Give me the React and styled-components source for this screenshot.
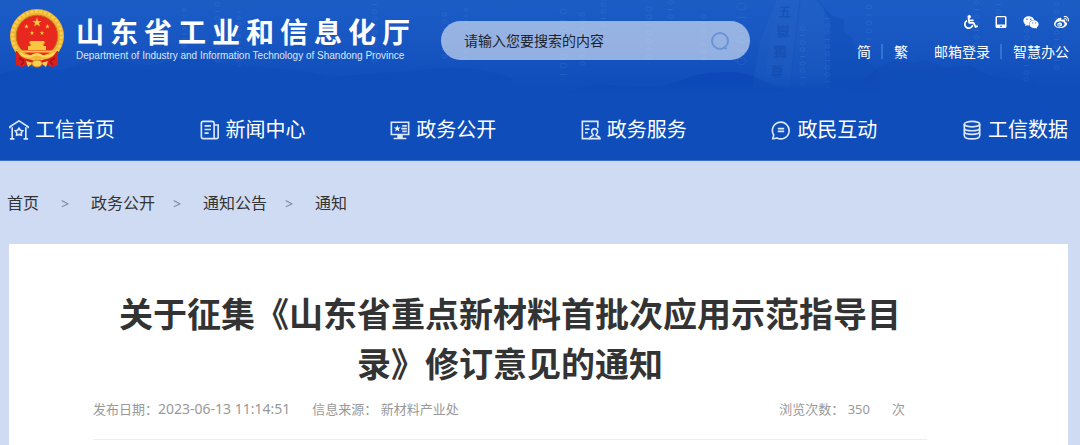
import { useState } from "react";
import styled, { createGlobalStyle } from "styled-components";
import { FaWheelchair, FaWeixin, FaWeibo } from "react-icons/fa";

const sans = `"Noto Sans", "Noto Sans CJK SC", sans-serif`;

const GlobalStyle = createGlobalStyle`
    * {
        box-sizing: border-box;
    }
    body {
        margin: 0;
        background-color: #cfdbf2;
        font-family: ${sans};
        color: #333;
    }
    a {
        color: inherit;
        text-decoration: none;
    }
`
let Page = styled.div`
    display: flex;
    flex-direction: column;
    min-height: 100vh;
`
let Header = styled.header`
    position: relative;
    overflow: hidden;
    color: #fff;
    background: linear-gradient(#1b5cc5 0, #1857c2 40px, #0e4dba 92px);
    border-bottom: 1px solid #3b70cb;
`
let Backdrop = styled.svg`
    position: absolute;
    top: 0;
    right: 0;
    width: 1080px;
    height: 100px;
`
let HeaderTop = styled.div`
    position: relative;
    display: flex;
    align-items: flex-start;
    height: 100px;
    padding: 8px 11px 0 8px;
`
let Brand = styled.a`
    display: flex;
    gap: 10px;
`
let BrandText = styled.div`
    display: flex;
    flex-direction: column;
    padding-top: 8px;
`
let BrandName = styled.span`
    font-size: 28px;
    line-height: 32px;
    font-weight: 700;
    letter-spacing: 6px;
    white-space: nowrap;
`
let BrandSub = styled.span`
    font-family: "Liberation Sans", Arial, sans-serif;
    font-size: 10px;
    line-height: 16px;
    white-space: nowrap;
    color: #dbe6fa;
`
let Search = styled.form`
    display: flex;
    align-items: center;
    width: 309px;
    height: 39px;
    margin: 13px 0 0 25px;
    padding: 0 20px 0 23px;
    border-radius: 20px;
    background-color: rgba(255, 255, 255, 0.54);
`
let SearchInput = styled.input`
    flex: 1;
    min-width: 0;
    padding: 0;
    border: 0;
    outline: none;
    background: none;
    font-family: ${sans};
    font-size: 14px;
    color: #1c2430;
    &::placeholder {
        color: #1c2430;
        opacity: 1;
    }
`
let SearchBtn = styled.button`
    display: flex;
    padding: 0;
    border: 0;
    background: none;
    color: #6c92d8;
    cursor: pointer;
`
let Tools = styled.div`
    display: flex;
    flex-direction: column;
    align-items: flex-end;
    gap: 10px;
    margin-left: auto;
    padding-top: 6px;
`
let ToolIcons = styled.div`
    display: flex;
    gap: 14px;
    a {
        display: flex;
        align-items: center;
        justify-content: center;
        width: 16px;
        height: 16px;
    }
`
let ToolLinks = styled.div`
    display: flex;
    gap: 26px;
    font-size: 14px;
    line-height: 24px;
    white-space: nowrap;
`
let LinkPair = styled.div`
    display: flex;
    align-items: center;
    a + a::before {
        content: "";
        display: inline-block;
        width: 2px;
        height: 15px;
        margin: 0 11px 0 10px;
        vertical-align: -2px;
        background-color: #2f76d2;
    }
`
let Nav = styled.nav`
    position: relative;
    display: flex;
    justify-content: space-between;
    padding: 10px 12px 10px 9px;
`
let NavItem = styled.a`
    display: flex;
    align-items: center;
    gap: 6px;
    font-size: 20px;
    line-height: 40px;
    white-space: nowrap;
    svg {
        fill: none;
        stroke: #dce7fb;
        stroke-width: 1.8;
    }
`
let Crumbs = styled.nav`
    display: flex;
    padding: 30px 7px 28px;
    font-size: 16px;
    line-height: 25px;
`
let Crumb = styled.a`
    & + &::before {
        content: ">";
        display: inline-block;
        width: 44px;
        padding-right: 4px;
        text-align: center;
        font-size: 14px;
        color: #7e8796;
    }
    &:first-child {
        margin-right: 4px;
    }
`
let Article = styled.main`
    flex: 1;
    margin: 0 12px 0 9px;
    padding: 45px 141px 0 84px;
    background-color: #fff;
`
let Title = styled.h1`
    margin: 0;
    padding: 0 20px;
    font-size: 34px;
    line-height: 50px;
    font-weight: 700;
    text-align: center;
`
let Meta = styled.div`
    display: flex;
    gap: 22px;
    padding: 9px 22px 19px 0;
    border-bottom: 1px solid #eee;
    font-size: 13px;
    line-height: 22px;
    color: #999;
    time {
        font-size: 14px;
    }
`
let Views = styled.span`
    display: flex;
    gap: 22px;
    margin-left: auto;
`

// five-pointed star path around (cx, cy)
const star = (cx, cy, r) => {
    let d = '';
    for (let i = 0; i < 10; i++) {
        const rr = i % 2 ? r * 0.4 : r;
        const t = (Math.PI / 5) * i - Math.PI / 2;
        d += (i ? 'L' : 'M') + (cx + rr * Math.cos(t)).toFixed(2) + ' ' + (cy + rr * Math.sin(t)).toFixed(2);
    }
    return d + 'Z';
}

const Emblem = () => (
    <svg width="58" height="62" viewBox="0 0 58 62" aria-hidden="true">
        <circle cx="29" cy="28" r="27" fill="#f0b233" />
        <circle cx="29" cy="28" r="24.5" fill="none" stroke="#f9cf52" strokeWidth="3" strokeDasharray="3 1.5" />
        <circle cx="29" cy="28" r="20.8" fill="#e8281f" stroke="#b97718" />
        <path d={star(29, 14.5, 5) + star(18.5, 18.5, 2.4) + star(39.5, 18.5, 2.4) + star(24, 25, 2.4) + star(34, 25, 2.4)} fill="#f6c93b" />
        <path d="M22 33h14l1 2.5H21zM22.500 35.500h13v2.500h-13zM20 38h18v4h-18zM12 42.500h34v2H12z" fill="#f8c73e" />
        <path d="M8 43l1 0q4 6 11 8 9 3 18 0 7-2 11-8l1 0v14l-6 2-5-2-10 2-10-2-5 2-6-2z" fill="#d9201f" />
        <path d="M11 50l5 3M47 50l-5 3M13 57l3-3M45 57l-3-3" stroke="#a50f14" strokeWidth="1.5" />
        <path d="M9 40c5 5 10 7 14 7q6-4 12 0c4 0 9-2 14-7-1 7-6 11-12 11q-8-2-16 0C15 51 10 47 9 40z" fill="#f2b632" />
        <path d="M12 45c4 4 8 4 12 3q5-3 10 0c4 1 8 1 12-3" fill="none" stroke="#fbd864" strokeWidth="2" />
        <path d="M18 53l7 2-5 4zM40 53l-7 2 5 4z" fill="#f7cf55" />
        <ellipse cx="29" cy="55.500" rx="5" ry="3.500" fill="#f7cf55" stroke="#c98a1b" />
    </svg>
)

// streams: x, first y, number of digits, digit size
const streams = [
    [35, 18, 5, 5], [182, 8, 8, 4], [215, 2, 9, 5], [237, 10, 10, 4], [372, 2, 9, 5],
    [442, 12, 7, 5], [464, 8, 9, 4], [560, 8, 8, 7], [580, 12, 8, 5], [601, 2, 6, 5],
    [646, 6, 7, 6], [668, 0, 3, 5], [701, 14, 7, 5], [737, 2, 6, 9], [800, 26, 9, 5],
    [825, 16, 11, 5], [866, 4, 5, 6], [974, 0, 8, 5], [996, 2, 3, 5], [1024, 28, 8, 5], [1054, 2, 10, 5],
]

const HeaderBackdrop = () => (
    <Backdrop viewBox="0 0 1080 100" aria-hidden="true">
        <defs>
            <linearGradient id="haze" x1="0" y1="0" x2="0" y2="1">
                <stop offset="0" stopColor="#0e4dba" stopOpacity="0" />
                <stop offset="1" stopColor="#0e4dba" />
            </linearGradient>
        </defs>
        <path d="M0 74q24-8 46-5t34-6q26-6 50 0t52-6q20-2 34 4t46 6q40 2 70 10 40-4 80-6 60-10 100 8v20H0z" fill="#0a45b6" opacity=".3" />
        <path d="M570 92q22-10 40-7t44 2q24-4 42-12 34-6 54 0 20 8 40 18H570z" fill="#0a43b4" opacity=".6" />
        <path d="M818 0l8 10 6 6 12 4v12l8 6 4 14 12 4 2 8 8 6 2 20H830V20z" fill="#0d49b2" opacity=".32" />
        <path d="M776 0h38l10 8 4 80h-76l8-46z" fill="#4079cf" opacity=".12" />
        <path d="M776 0h24l-9 86h-28z" fill="#4079cf" opacity=".08" />
        <path d="M800 0l-10 88" stroke="#0d49b2" opacity=".3" />
        <path d="M880 66l14-5 20 2 12-3 20 8 24-3 20 11 32 5 30 11H850z" fill="#0d49b5" opacity=".35" />
        <text fontSize="13" fontWeight="700" fontFamily={sans} fill="#0b3f9f" opacity=".36" textAnchor="middle">
            <tspan x="785" y="16">五</tspan>
            <tspan x="783" y="36">嶽</tspan>
            <tspan x="780" y="56">獨</tspan>
            <tspan x="777" y="76">尊</tspan>
        </text>
        <g fill="none" stroke="#6aa2ee" opacity=".16">
            {streams.map(([x, y, n, s]) => (
                Array.from({ length: n }, (_, i) => (
                    (i * 7 + x) % 3 === 0
                        ? <path key={x + '-' + i} d={`M${x} ${y + i * (s + 2) + s / 2}h${s}`} />
                        : <ellipse key={x + '-' + i} cx={x + s / 2} cy={y + i * (s + 2) + s / 2} rx={s / 2} ry={s / 3} />
                ))
            ))}
        </g>
        <path d="M0 74h1080v20H0z" fill="url(#haze)" />
        <path d="M0 94h1080v6H0z" fill="#0e4dba" />
    </Backdrop>
)

const navs = [
    {
        name: '工信首页',
        icon: <>
            <path d="M1 9V7.500l10-6.500 10 6.500V9M3.500 8v12.500M18.500 8v12.500M1 20.700h5M16 20.700h5" />
            <path d="M11 9l1.500 2.200 2.600.7-1.600 2.100.1 2.700-2.600-.9-2.600.9.1-2.700-1.600-2.100 2.600-.7z" />
        </>
    },
    {
        name: '新闻中心',
        icon: <path d="M3.500 1.500h10q2 0 2 2v17h-12q-2 0-2-2v-15q0-2 2-2zM15.500 5.500h4.500v13q0 2-2 2h-4M5 6.500h7M5 10.500h7M5 14.500h4.500" />
    },
    {
        name: '政务公开',
        icon: <>
            <path d="M1.500 2.500h19v13.500h-19zM13.500 6.500h5M12.500 9.500h6M13.500 12.500h5M4 20.300h14" />
            <path d={star(8, 9.500, 4)} fill="#fff" stroke="none" />
            <path d="M8 16h6v4h-6z" fill="#dce7fb" stroke="none" />
        </>
    },
    {
        name: '政务服务',
        icon: <>
            <path d="M10 20.500H1.500v-19h17v7M4.500 6H9M4.500 10h5M4.500 14h3" />
            <path d="M13.500 16.500c-3-3-2-7 1.500-7s4.500 4 1.500 7c0 1.500 4.500 1 4.500 4H9.500c0-3 4-2.500 4-4z" />
        </>
    },
    {
        name: '政民互动',
        icon: <path d="M2 20.500l1-4a9.200 9.200 0 1 1 3.500 3.200q-2 .8-4.500.8zM7.500 9.500h7M7.500 12.500h7" />
    },
    {
        name: '工信数据',
        icon: <>
            <ellipse cx="11" cy="4.500" rx="8.500" ry="3" />
            <path d="M2.500 4.500v12.500c0 5 17 5 17 0V4.500M2.500 8.500c0 4.500 17 4.500 17 0M2.500 12.500c0 4.500 17 4.500 17 0" />
        </>
    },
]

const crumbs = ['首页', '政务公开', '通知公告', '通知']

function App() {

    let [keyword, setKeyword] = useState('');

    return (
        <Page>
            <GlobalStyle />
            <Header>
                <HeaderBackdrop />
                <HeaderTop>
                    <Brand href="#">
                        <Emblem />
                        <BrandText>
                            <BrandName>山东省工业和信息化厅</BrandName>
                            <BrandSub>Department of Industry and Information Technology of Shandong Province</BrandSub>
                        </BrandText>
                    </Brand>
                    <Search onSubmit={(e) => e.preventDefault()}>
                        <SearchInput
                            aria-label="搜索"
                            placeholder="请输入您要搜索的内容"
                            value={keyword}
                            onChange={(e) => { setKeyword(e.target.value) }}
                        />
                        <SearchBtn type="submit" aria-label="搜索">
                            <svg width="20" height="20" viewBox="0 0 20 20" fill="none" stroke="currentColor" strokeWidth="2">
                                <circle cx="10" cy="10" r="8" />
                                <path d="M14 15.500l2.500 2.500" />
                            </svg>
                        </SearchBtn>
                    </Search>
                    <Tools>
                        <ToolIcons>
                            <a href="#" aria-label="无障碍"><FaWheelchair size={14} /></a>
                            <a href="#" aria-label="手机版">
                                <svg width="12" height="14" viewBox="0 0 12 14">
                                    <path fillRule="evenodd" fill="#fff" d="M2 1h8q1.500 0 1.500 1.500v9q0 1.500-1.500 1.500H2Q.5 13 .5 11.500v-9Q.5 1 2 1zm0 1.200v7.300h8V2.200zM5 10.700v1h2v-1z" />
                                </svg>
                            </a>
                            <a href="#" aria-label="微信"><FaWeixin size={17} /></a>
                            <a href="#" aria-label="微博"><FaWeibo size={15} /></a>
                        </ToolIcons>
                        <ToolLinks>
                            <LinkPair>
                                <a href="#">简</a>
                                <a href="#">繁</a>
                            </LinkPair>
                            <LinkPair>
                                <a href="#">邮箱登录</a>
                                <a href="#">智慧办公</a>
                            </LinkPair>
                        </ToolLinks>
                    </Tools>
                </HeaderTop>
                <Nav>
                    {
                        navs.map((a) => (
                            <NavItem key={a.name} href="#">
                                <svg width="20" height="20" viewBox="0 0 22 22" aria-hidden="true">{a.icon}</svg>
                                {a.name}
                            </NavItem>
                        ))
                    }
                </Nav>
            </Header>
            <Crumbs>
                {crumbs.map((a) => <Crumb key={a} href="#">{a}</Crumb>)}
            </Crumbs>
            <Article>
                <Title>关于征集《山东省重点新材料首批次应用示范指导目录》修订意见的通知</Title>
                <Meta>
                    <span>发布日期：<time>2023-06-13 11:14:51</time></span>
                    <span>信息来源： 新材料产业处</span>
                    <Views>
                        <span>浏览次数： 350</span>
                        <span>次</span>
                    </Views>
                </Meta>
            </Article>
        </Page>
    )
}

export default App
